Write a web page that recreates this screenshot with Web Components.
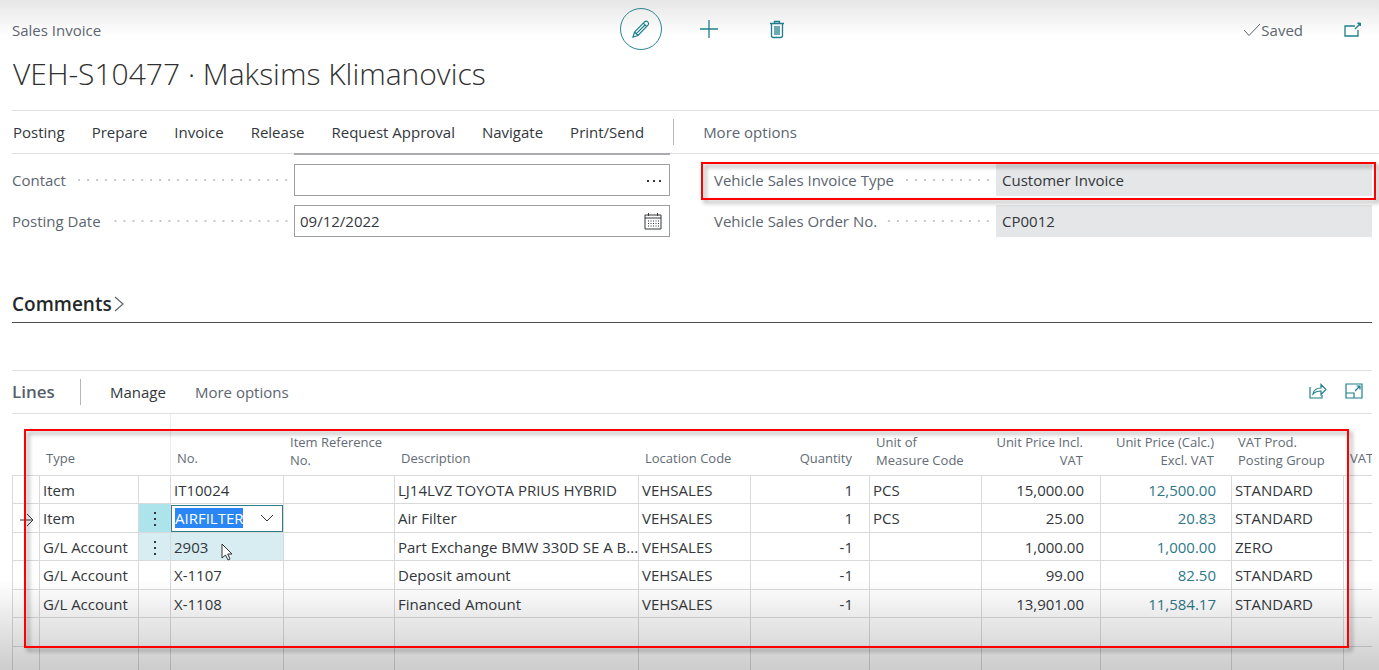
<!DOCTYPE html>
<html lang="en">
<head>
<meta charset="utf-8">
<title>Sales Invoice</title>
<style>
  body { margin: 0; background: #fff; font-family: "Open Sans", "Noto Sans", sans-serif; font-size: 15px; line-height: 20px; color: #33373b; overflow: hidden; }
</style>
</head>
<body>
<sales-invoice-page></sales-invoice-page>
<script>
const define = (name, html, setup) => {
  const template = document.createElement('template');
  template.innerHTML = html;
  customElements.define(name, class extends HTMLElement {
    connectedCallback() {
      if (this.shadowRoot) return;
      this.attachShadow({ mode: 'open' }).append(template.content.cloneNode(true));
      if (setup) setup(this, this.shadowRoot);
    }
  });
};

const icons = {
  pencil: [18, '<path stroke-width="1.200" d="M1 17l1.500-5L12.800 1.700q1.500-1.200 3 .2t.4 3L6 15.500zM2.500 12L6 15.500M11.300 3.200l3.500 3.500M4.300 13.700L13 5"/>'],
  plus: [18, '<path stroke-width="1.300" d="M9 0v18M0 9h18"/>'],
  trash: [18, '<path stroke-width="1.300" d="M2 3.500h14M6.500 3.500V1.500h5v2M3.500 3.500v12q0 2 2 2h7q2 0 2-2v-12M7 6v9M9 6v9M11 6v9"/>'],
  check: [18, '<path d="M1 9l5 5.500L17 3"/>'],
  popout: [18, '<path stroke-width="1.300" d="M11 5H1v10h13V9M11 8l5-5"/><path d="M13.500 2h3v3z" fill="currentColor"/>'],
  share: [18, '<path stroke-width="1.200" d="M1 5v11h12v-3M4 12q1-6 8-6V2.500l5 5-5 5V9q-5 0-8 3z"/>'],
  expand: [18, '<path stroke-width="1.200" d="M1 9V2h16v14H9M1 9v7h8v-5H1M10 9l5-5M11.500 4H15v3.500"/>'],
  calendar: [18, '<path d="M1 3h16v14H1zM1 6h16M4.500 1v3M13.500 1v3"/><path stroke-dasharray="1 1.500" d="M4 9h11M4 11.500h11M4 14h11"/>'],
  dots: [18, '<g fill="currentColor" stroke="none"><rect x="3" y="9" width="2" height="2"/><rect x="9" y="9" width="2" height="2"/><rect x="15" y="9" width="2" height="2"/></g>'],
  more: [18, '<g fill="currentColor" stroke="none"><rect x="8" y="2" width="2" height="2"/><rect x="8" y="8" width="2" height="2"/><rect x="8" y="14" width="2" height="2"/></g>'],
  right: [16, '<path stroke-width="1.200" d="M3 1l8 7-8 7"/>'],
  down: [14, '<path d="M1 4l6 6 6-6"/>'],
  arrow: [14, '<path d="M0 7h13M7 1l6 6-6 6"/>'],
  cursor: [18, '<path fill="#fff" d="M4 1v14l3.500-3 2.500 5 2-1-2.300-5H14z"/>']
};
define('line-icon', '<style>:host{display:inline-flex;flex:none}svg{display:block;overflow:visible}</style>', (host, root) => {
  const [size, body] = icons[host.getAttribute('name')];
  root.innerHTML += `<svg width="${size}" height="${size}" viewBox="0 0 ${size} ${size}" fill="none" stroke="currentColor" aria-hidden="true">${body}</svg>`;
});

define('call-out', `<style>
  :host { position: absolute; z-index: 5; border: 2px solid #f00; box-sizing: border-box; pointer-events: none; filter: drop-shadow(3px 3px 2px rgba(0,0,0,.4)); }
</style>`);

define('page-header', `<style>
  :host { display: block; }
  .bar { display: flex; align-items: center; height: 58px; padding: 0 17px 0 12px; }
  .crumb { flex: 14 1 0; color: #5c6570; padding-top: 2px; }
  .actions { display: flex; align-items: center; gap: 26px; }
  button { font: inherit; background: none; border: 1px solid transparent; padding: 0; margin: 0; color: #1f7f8c; width: 42px; height: 42px; display: flex; align-items: center; justify-content: center; }
  .edit { border-color: #2a8692; border-radius: 50%; }
  .status { flex: 13 1 0; display: flex; justify-content: flex-end; align-items: center; color: #5c6570; padding-top: 2px; }
  .status button { width: 18px; height: 18px; margin-left: 41px; }
  h1 { margin: 0; padding: 0 13px; font-weight: 300; font-size: 30px; line-height: 32px; height: 52px; color: #303030; white-space: nowrap; }
</style>
<div class="bar">
  <div class="crumb">Sales Invoice</div>
  <div class="actions">
    <button class="edit" aria-label="Edit"><line-icon name="pencil"></line-icon></button>
    <button aria-label="New"><line-icon name="plus"></line-icon></button>
    <button aria-label="Delete"><line-icon name="trash"></line-icon></button>
  </div>
  <div class="status"><line-icon name="check"></line-icon><span>Saved</span>
    <button aria-label="Open in new window"><line-icon name="popout"></line-icon></button></div>
</div>
<h1><slot></slot></h1>`);

define('action-bar', `<style>
  :host { display: flex; align-items: center; height: 42px; margin-left: 12px; border: solid #dedfe1; border-width: 1px 0; padding-left: 1px; }
  nav { display: flex; gap: 27px; }
  button { font: inherit; color: inherit; background: none; border: 0; padding: 0; white-space: nowrap; }
  .more { border-left: 1px solid #b4b7bb; margin-left: 29px; padding-left: 29px; height: 26px; color: #5c6570; }
</style><nav></nav><button class="more">More options</button>`, (host, root) => {
  for (const label of host.getAttribute('items').split(',')) {
    const b = document.createElement('button'); b.textContent = label; root.querySelector('nav').append(b);
  }
});

define('form-field', `<style>
  :host { display: grid; grid-template-columns: 3fr 4fr; height: 32px; align-items: center; }
  label { display: flex; align-items: center; color: #5c6570; white-space: nowrap; }
  label::after { content: ""; flex: 1; height: 2px; margin: 0 4px 0 8px; background: linear-gradient(90deg, transparent 7px, #c6c9cc 7px) right / 9px 2px repeat-x; background-position: right 3px top; }
  .box { display: flex; align-items: center; height: 32px; box-sizing: border-box; border: 1px solid #9b9da1; padding: 0 7px 0 5px; background: #fff; }
  :host([readonly]) .box { background: #e5e6e8; border-color: #e5e6e8; }
  input { font: inherit; color: #33373b; background: none; border: 0; padding: 0; outline: 0; flex: 1; min-width: 0; }
</style>
<label for="v"></label><div class="box"><input id="v"></div>`, (host, root) => {
  root.querySelector('label').textContent = host.getAttribute('label');
  const input = root.querySelector('input');
  input.value = host.getAttribute('value') || '';
  input.readOnly = host.hasAttribute('readonly');
  if (host.hasAttribute('icon')) {
    const i = document.createElement('line-icon'); i.setAttribute('name', host.getAttribute('icon')); root.querySelector('.box').append(i);
  }
});

define('form-area', `<style>
  :host { display: grid; grid-template-columns: 1fr 1fr; column-gap: 44px; padding: 0 7px 0 12px; }
  .col { position: relative; display: grid; row-gap: 9px; align-content: start; }
  .cut { height: 2px; margin: -1px 0 0; display: grid; grid-template-columns: 3fr 4fr; }
  .cut::after { content: ""; grid-column: 2; height: 2px; background: #a9abae; }
  call-out { left: -13px; right: -4px; top: 8px; height: 38px; }
</style>
<div class="col"><div class="cut"></div><slot name="left"></slot></div>
<div class="col"><div class="cut" style="visibility:hidden"></div><slot name="right"></slot><call-out></call-out></div>`);

define('fast-tab', `<style>
  :host { display: block; margin: 0 7px 0 12px; border-bottom: 1px solid #4c4f52; }
  h2 { margin: 0; font-weight: 600; font-size: 19px; line-height: 24px; height: 31px; color: #24282b; display: flex; }
  button { font: inherit; color: inherit; background: none; border: 0; padding: 0; display: flex; align-items: center; height: 26px; }
  line-icon { color: #5c6570; }
</style><h2><button><slot></slot><line-icon name="right"></line-icon></button></h2>`);

define('lines-bar', `<style>
  :host { display: flex; align-items: center; height: 42px; margin: 47px 7px 0 12px; border: solid #e1e2e4; border-width: 1px 0; }
  h2 { margin: 0; font-size: 17px; font-weight: 600; color: #56606b; line-height: 26px; width: 68px; border-right: 1px solid #b4b7bb; }
  button { font: inherit; color: inherit; background: none; border: 0; padding: 0; margin-left: 29px; white-space: nowrap; }
  .more { color: #5c6570; flex: none; }
  .end { display: flex; gap: 18px; margin-left: auto; padding: 2px 9px 0 0; color: #1f7f8c; }
  .end button { margin: 0; }
</style>
<h2>Lines</h2><button>Manage</button><button class="more">More options</button>
<div class="end"><button aria-label="Share"><line-icon name="share"></line-icon></button><button aria-label="Expand"><line-icon name="expand"></line-icon></button></div>`);

const columns = [
  ['', 28], ['Type', 99], ['', 32], ['No.', 113], ['Item Reference<br>No.', 111], ['Description', 0], ['Location Code', 112],
  ['Quantity', 119, 'n'], ['Unit of<br>Measure Code', 112], ['Unit Price Incl.<br>VAT', 119, 'n'], ['Unit Price (Calc.)<br>Excl. VAT', 131, 'n'],
  ['VAT Prod.<br>Posting Group', 112], ['VAT', 28]
];
const rows = [
  ['Item', 'IT10024', 'LJ14LVZ TOYOTA PRIUS HYBRID', '1', 'PCS', '15,000.00', '12,500.00', 'STANDARD'],
  ['Item', 'AIRFILTER', 'Air Filter', '1', 'PCS', '25.00', '20.83', 'STANDARD'],
  ['G/L Account', '2903', 'Part Exchange BMW 330D SE A B...', '-1', '', '1,000.00', '1,000.00', 'ZERO'],
  ['G/L Account', 'X-1107', 'Deposit amount', '-1', '', '99.00', '82.50', 'STANDARD'],
  ['G/L Account', 'X-1108', 'Financed Amount', '-1', '', '13,901.00', '11,584.17', 'STANDARD'],
  null, null
];
define('invoice-lines', `<style>
  :host { display: block; position: relative; margin: 0 7px 0 12px; }
  table { width: 100%; table-layout: fixed; border-spacing: 0; }
  th { box-sizing: border-box; height: 62px; padding: 0 0 6px 6px; vertical-align: bottom; text-align: left; font-weight: 400; font-size: 13px; line-height: 18px; color: #626b75; border-bottom: 1px solid #d8d9db; white-space: nowrap; overflow: hidden; }
  th.one { padding-bottom: 8px; }
  th:nth-child(3) { border-right: 1px solid #ececee; }
  th.n { text-align: right; padding-right: 18px; }
  tr { height: 28px; }
  tr:nth-child(even) { height: 29px; }
  td { box-sizing: border-box; padding: 0 0 0 3px; border: solid #d8d9db; border-width: 0 1px 1px 0; white-space: nowrap; overflow: hidden; }
  td:first-child { border-left-width: 1px; padding: 0 5px 0 0; text-align: right; }
  td:last-child { border-right: 0; }
  td.n { text-align: right; padding-right: 16px; }
  td.calc { color: #2f7887; padding-right: 15px; }
  td:nth-child(3) { padding: 0; text-align: center; }
  line-icon { vertical-align: middle; }
  .on { background: #ade4ec; }
  .near { background: #d8edf1; }
  td.edit { padding: 0; }
  .combo { display: flex; align-items: center; justify-content: space-between; box-sizing: border-box; height: 27px; border: 1px solid #2a7d89; background: #fff; padding: 0 8px 0 3px; }
  .combo input { font: inherit; color: #fff; background: #2a86f5; border: 0; padding: 0; width: 68px; height: 20px; outline: 0; }
  .pointer { position: absolute; left: 206px; top: 129px; color: #333; }
  call-out { left: 12px; right: 23px; top: 15px; height: 219px; }
</style>
<table><colgroup></colgroup><thead><tr></tr></thead><tbody></tbody></table>
<line-icon class="pointer" name="cursor"></line-icon>
<call-out></call-out>`, (host, root) => {
  root.querySelector('colgroup').innerHTML = columns.map(([, w]) => w ? `<col style="width:${w}px">` : '<col>').join('');
  root.querySelector('thead tr').innerHTML = columns.map(([t, , c]) => `<th class="${c || ''} ${t.includes('<br>') ? '' : 'one'}">${t}</th>`).join('');
  root.querySelector('tbody').innerHTML = rows.map((r, i) => {
    if (!r) return '<tr>' + '<td></td>'.repeat(13) + '</tr>';
    const [type, no, desc, qty, unit, price, calc, vat] = r;
    const shade = i === 1 ? 'on' : i === 2 ? 'near' : '';
    const noCell = i === 1
      ? `<td class="edit"><div class="combo"><input aria-label="No." value="${no}"><line-icon name="down"></line-icon></div></td>`
      : `<td class="${shade}">${no}</td>`;
    return `<tr><td>${i === 1 ? '<line-icon name="arrow"></line-icon>' : ''}</td><td>${type}</td>
      <td class="${shade}">${shade ? '<line-icon name="more"></line-icon>' : ''}</td>${noCell}<td></td><td>${desc}</td><td>VEHSALES</td>
      <td class="n">${qty}</td><td>${unit}</td><td class="n">${price}</td><td class="n calc">${calc}</td><td>${vat}</td><td></td></tr>`;
  }).join('');
});

define('sales-invoice-page', `<style>
  :host { display: block; position: relative; height: 100vh; overflow: hidden; background: linear-gradient(#e6e6e6, #fff 36px); }
  :host::after { content: ""; position: absolute; left: 0; right: 0; bottom: 0; height: 90px; z-index: 2; pointer-events: none; background: linear-gradient(rgba(0,0,0,0), rgba(0,0,0,.2)); }
  form-area { margin-bottom: 54px; }
</style>
<page-header>VEH-S10477 · Maksims Klimanovics</page-header>
<action-bar items="Posting,Prepare,Invoice,Release,Request Approval,Navigate,Print/Send"></action-bar>
<form-area>
  <form-field slot="left" label="Contact" icon="dots"></form-field>
  <form-field slot="left" label="Posting Date" value="09/12/2022" icon="calendar"></form-field>
  <form-field slot="right" readonly label="Vehicle Sales Invoice Type" value="Customer Invoice"></form-field>
  <form-field slot="right" readonly label="Vehicle Sales Order No." value="CP0012"></form-field>
</form-area>
<fast-tab>Comments</fast-tab>
<lines-bar></lines-bar>
<invoice-lines></invoice-lines>`);
</script>
</body>
</html>
